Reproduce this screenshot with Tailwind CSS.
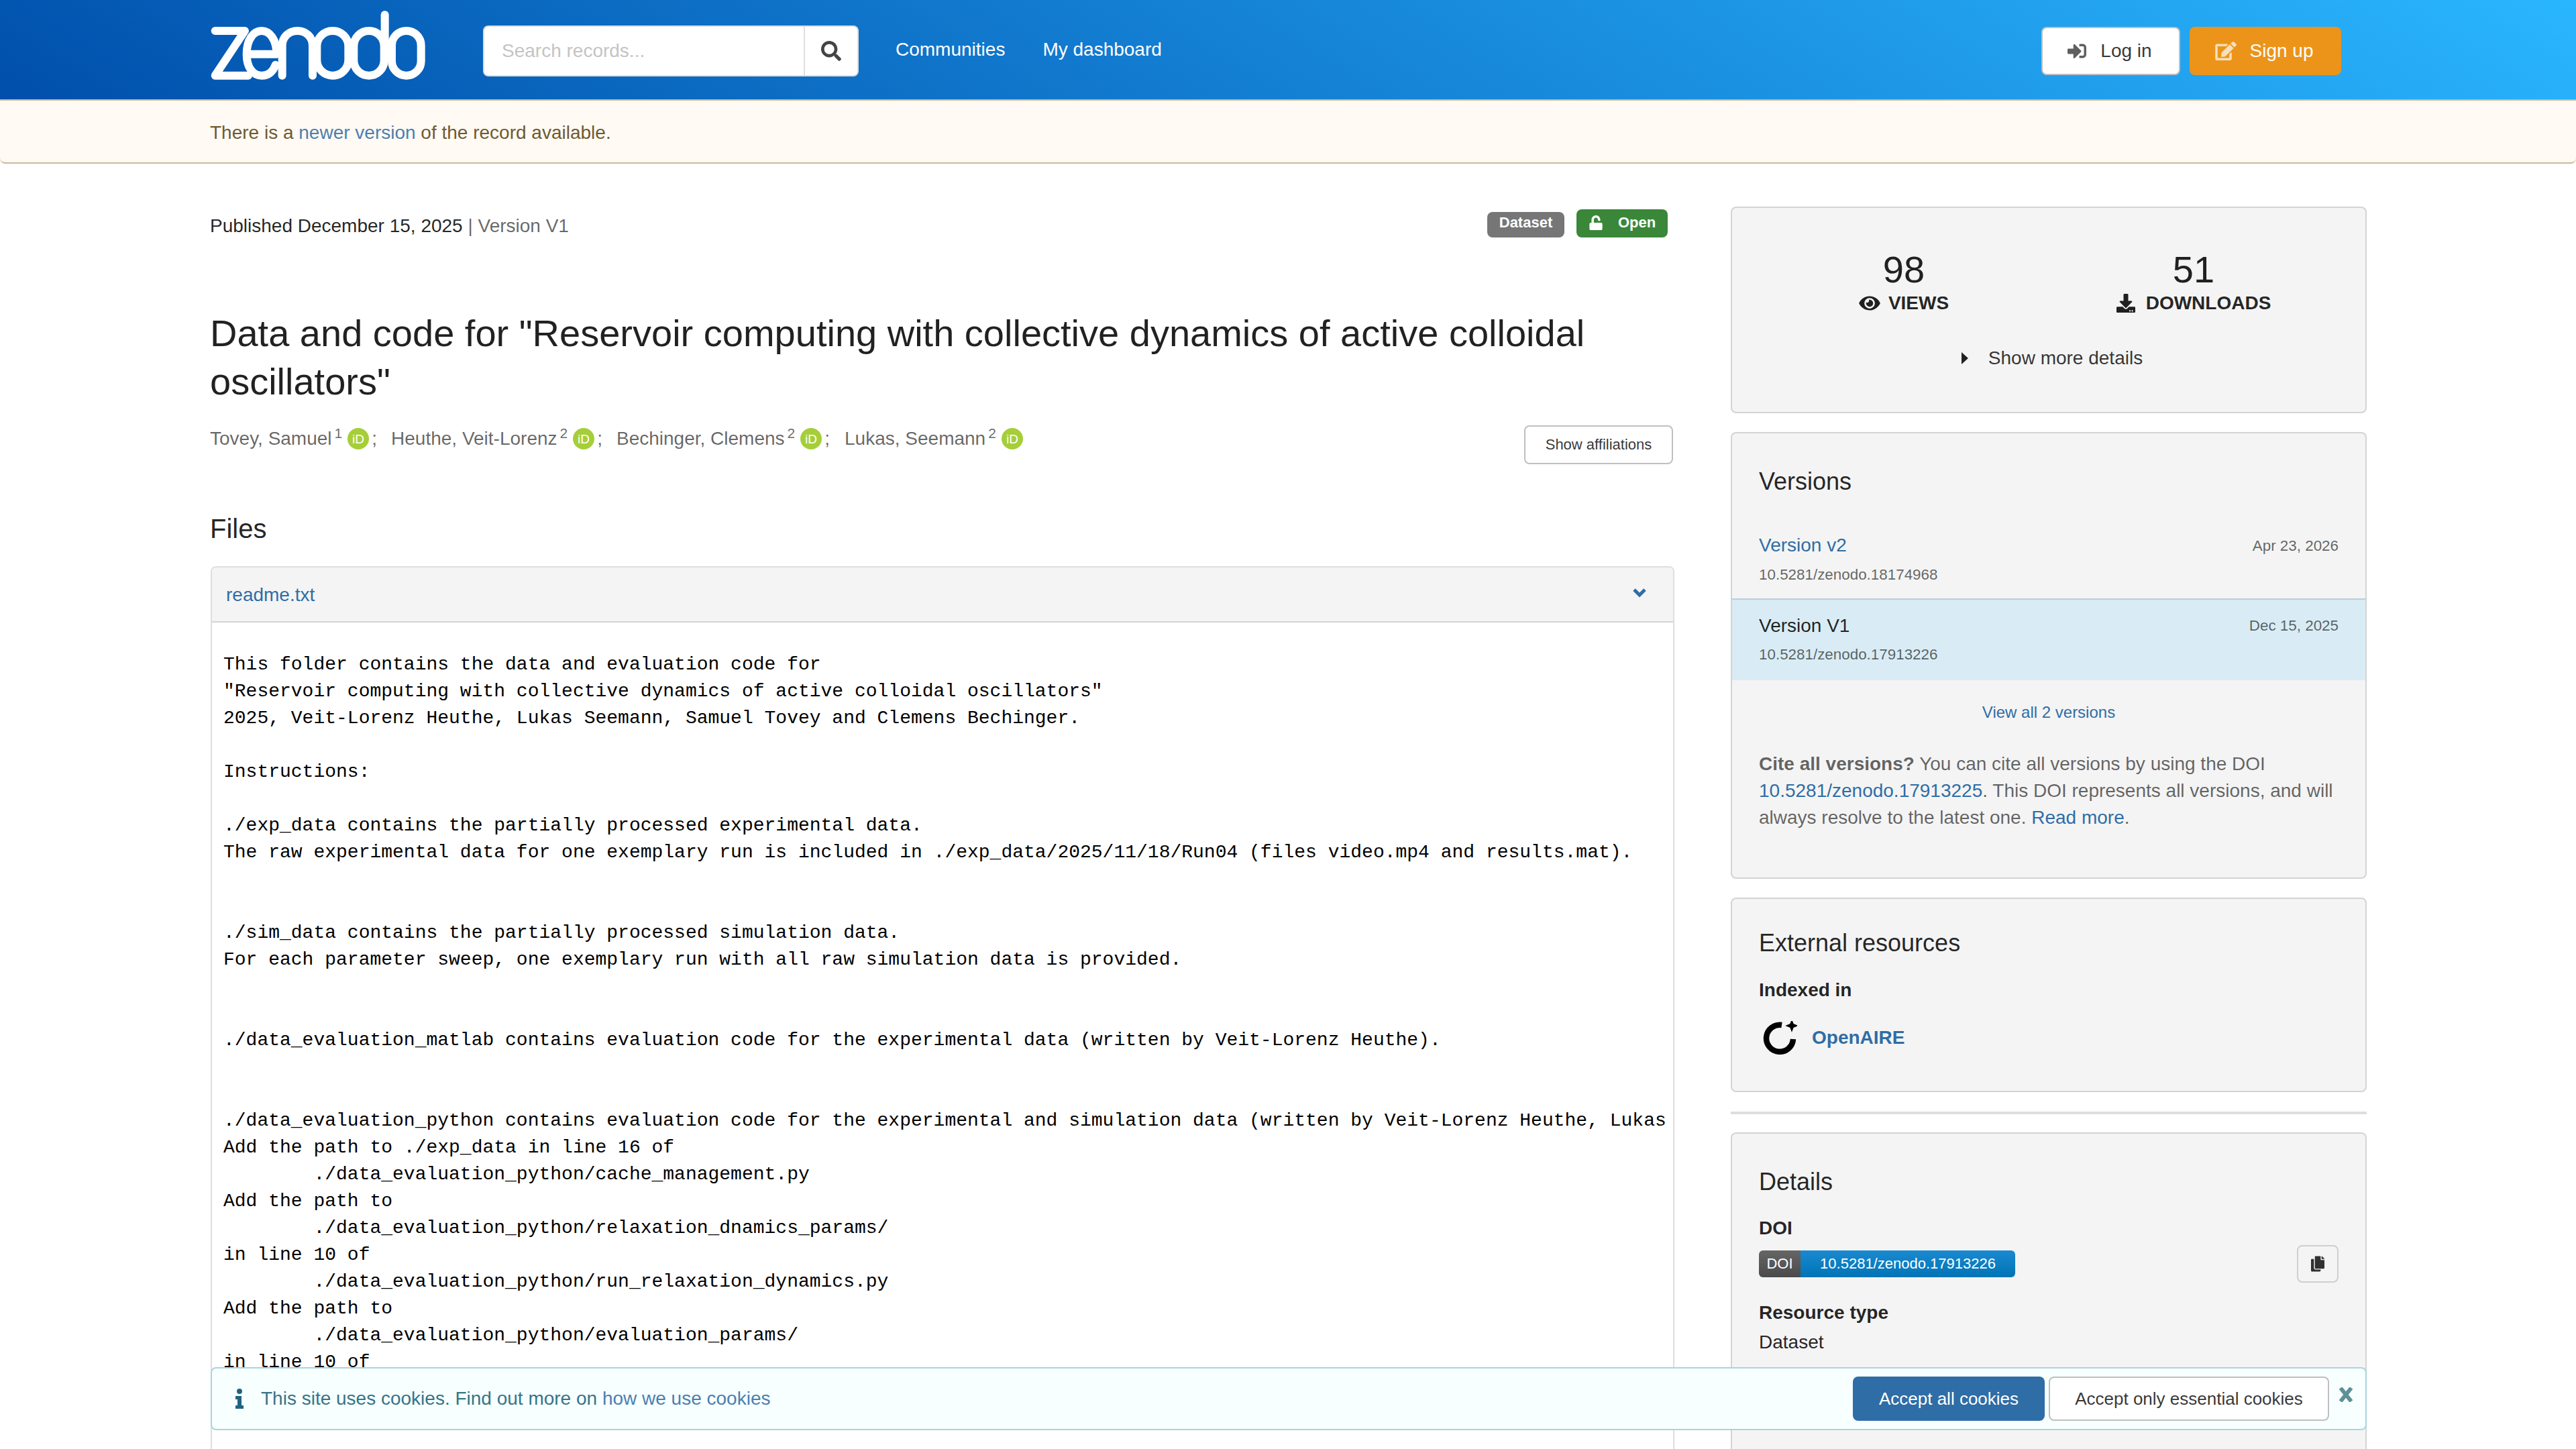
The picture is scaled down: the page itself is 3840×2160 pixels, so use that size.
<!DOCTYPE html>
<html>
<head>
<meta charset="utf-8">
<script src="https://cdn.jsdelivr.net/npm/@tailwindcss/browser@4"></script>
</head>
<body class="m-0 bg-white">
<div class="relative w-[3840px] h-[2160px] overflow-hidden font-['Liberation_Sans',Arial,sans-serif] text-[28px] leading-[40px] text-[#000000de]">

  <header class="h-[148px] bg-[linear-gradient(31deg,#004fab_0%,#2ab6ff_100%)]">
    <div class="w-[3216px] mx-auto h-full flex items-center relative">
      <svg class="absolute left-[-12px] top-0" width="360" height="140" viewBox="0 0 1080 420" fill="none" stroke="#fff" stroke-width="36" stroke-linecap="round" stroke-linejoin="round">
        <path d="M62 138H195L62 338H210"/>
        <path d="M203 242H337C337 175 305 138 270 138C235 138 203 175 203 242C203 300 230 338 270 338C300 338 322 320 332 290"/>
        <path d="M362 338V205C362 165 392 138 430 138C468 138 498 165 498 205V338"/>
        <rect x="517" y="138" width="141" height="200" rx="70"/>
        <rect x="682" y="138" width="136" height="200" rx="68"/>
        <path d="M821 66V240"/>
        <rect x="852" y="138" width="131" height="200" rx="65"/>
      </svg>
      <div class="ml-[408px] flex w-[560px] h-[76px] mt-[4px] bg-white rounded-[8px] border-2 border-[#22242626] overflow-hidden">
        <div class="flex-1 px-[26px] flex items-center text-[#c4c4c4] text-[28px]">Search records...</div>
        <div class="w-[80px] border-l-2 border-[#22242626] flex items-center justify-center">
          <svg width="30" height="30" viewBox="0 0 512 512" fill="#444"><path d="M505 442.700L405.300 343c-4.500-4.500-10.600-7-17-7H372c27.600-35.300 44-79.700 44-128C416 93.100 322.900 0 208 0S0 93.100 0 208s93.100 208 208 208c48.300 0 92.700-16.400 128-44v16.300c0 6.400 2.500 12.500 7 17l99.700 99.700c9.400 9.400 24.600 9.400 33.900 0l28.300-28.300c9.400-9.400 9.400-24.600.1-34zM208 336c-70.700 0-128-57.200-128-128 0-70.700 57.200-128 128-128 70.700 0 128 57.200 128 128 0 70.700-57.200 128-128 128z"/></svg>
        </div>
      </div>
      <a class="ml-[55px] text-white">Communities</a>
      <a class="ml-[56px] text-white">My dashboard</a>
      <div class="ml-auto mr-[38px] flex gap-[14px] mt-[4px]">
        <div class="w-[207px] h-[72px] pr-[4px] bg-white rounded-[8px] border-2 border-[#00000040] flex items-center justify-center gap-[20px] text-[#000000cc]">
          <svg width="30" height="28" viewBox="0 0 512 512" fill="#000000a0"><path d="M416 448h-84c-6.600 0-12-5.400-12-12v-40c0-6.600 5.400-12 12-12h84c17.700 0 32-14.300 32-32V160c0-17.700-14.300-32-32-32h-84c-6.600 0-12-5.400-12-12V76c0-6.600 5.400-12 12-12h84c53 0 96 43 96 96v192c0 53-43 96-96 96zm-47-201L201 79c-15-15-41-4.500-41 17v96H24c-13.300 0-24 10.700-24 24v96c0 13.300 10.700 24 24 24h136v96c0 21.500 26 32 41 17l168-168c9.300-9.400 9.300-24.600 0-34z"/></svg>
          <span>Log in</span>
        </div>
        <div class="w-[226px] h-[72px] pr-[4px] bg-[#ec9419] rounded-[8px] flex items-center justify-center gap-[20px] text-white">
          <svg width="32" height="28" viewBox="0 0 576 512" fill="#ffffffb3"><path d="M402.600 83.200l90.200 90.200c3.800 3.800 3.800 10 0 13.800L274.400 405.600l-92.800 10.300c-12.400 1.400-22.900-9.100-21.500-21.500l10.300-92.800L388.800 83.200c3.800-3.800 10-3.800 13.800 0zm162-22.900l-48.800-48.800c-15.200-15.200-39.900-15.200-55.200 0l-35.400 35.400c-3.800 3.800-3.800 10 0 13.800l90.200 90.200c3.800 3.800 10 3.800 13.800 0l35.400-35.400c15.200-15.300 15.200-40 0-55.200zM384 346.200V448H64V128h229.800c3.200 0 6.200-1.300 8.500-3.500l40-40c7.600-7.600 2.200-20.500-8.500-20.500H48C21.500 64 0 85.500 0 112v352c0 26.500 21.500 48 48 48h352c26.500 0 48-21.500 48-48V306.200c0-10.700-12.900-16-20.500-8.500l-40 40c-2.200 2.300-3.500 5.300-3.500 8.500z"/></svg>
          <span>Sign up</span>
        </div>
      </div>
    </div>
  </header>

  <div class="h-[96px] bg-[#fffaf3] border-y-2 border-[#c9ba9b] rounded-b-[8px] text-[#6e5a32]">
    <div class="w-[3216px] mx-auto h-full flex items-center pl-[1px] pt-[4px]">
      <p>There is a <a class="text-[#4a80b0]">newer version</a> of the record available.</p>
    </div>
  </div>

  <main class="w-[3216px] mx-auto flex justify-between mt-[64px]">
    <!-- left column -->
    <div class="w-[2184px] pl-[1px]">
      <div class="flex items-start justify-between h-[58px] pr-[10px]">
        <p class="pt-[9px]"><span>Published December 15, 2025</span> <span class="text-[#00000099]">| Version V1</span></p>
        <div class="flex gap-[18px] items-end h-[44px] mt-[2px] font-bold text-[22px] text-white">
          <div class="w-[115px] h-[38px] bg-[#767676] rounded-[8px] flex items-center justify-center leading-none pb-[6px]">Dataset</div>
          <div class="w-[136px] h-[42px] bg-[#3a873a] rounded-[8px] flex items-center justify-center gap-[22px] leading-none pb-[2px]">
            <svg width="22" height="22" viewBox="0 0 448 512" fill="#fff"><path d="M400 256H152V152.900c0-39.600 31.700-72.500 71.300-72.900 40-.4 72.700 32.100 72.700 72v16c0 13.300 10.700 24 24 24h32c13.300 0 24-10.700 24-24v-16C376 68 307.500-.3 223.500 0 139.500.3 72 69.500 72 153.500V256H48c-26.500 0-48 21.500-48 48v160c0 26.500 21.500 48 48 48h352c26.500 0 48-21.500 48-48V304c0-26.500-21.500-48-48-48z"/></svg>
            <span>Open</span>
          </div>
        </div>
      </div>
      <h1 class="mt-[95px] text-[56px] leading-[72px] font-normal text-[#000000de]">Data and code for "Reservoir computing with collective dynamics of active colloidal oscillators"</h1>
      <div class="flex justify-between mt-[29px] h-[60px]">
        <div class="flex items-start text-[#00000099] leading-[40px]">
          <span>Tovey, Samuel<sup class="text-[21px] ml-[4px]">1</sup></span><svg class="ml-[8px] mt-[4px] mr-[4px]" width="32" height="32" viewBox="0 0 32 32"><circle cx="16" cy="16" r="16" fill="#a6ce39"/><text x="16" y="22.500" font-size="19" text-anchor="middle" fill="#fff" font-family="Liberation Sans">iD</text></svg><span>;</span>
          <span class="ml-[21px]">Heuthe, Veit-Lorenz<sup class="text-[21px] ml-[4px]">2</sup></span><svg class="ml-[8px] mt-[4px] mr-[4px]" width="32" height="32" viewBox="0 0 32 32"><circle cx="16" cy="16" r="16" fill="#a6ce39"/><text x="16" y="22.500" font-size="19" text-anchor="middle" fill="#fff" font-family="Liberation Sans">iD</text></svg><span>;</span>
          <span class="ml-[21px]">Bechinger, Clemens<sup class="text-[21px] ml-[4px]">2</sup></span><svg class="ml-[8px] mt-[4px] mr-[4px]" width="32" height="32" viewBox="0 0 32 32"><circle cx="16" cy="16" r="16" fill="#a6ce39"/><text x="16" y="22.500" font-size="19" text-anchor="middle" fill="#fff" font-family="Liberation Sans">iD</text></svg><span>;</span>
          <span class="ml-[22px]">Lukas, Seemann<sup class="text-[21px] ml-[4px]">2</sup></span><svg class="ml-[8px] mt-[4px]" width="32" height="32" viewBox="0 0 32 32"><circle cx="16" cy="16" r="16" fill="#a6ce39"/><text x="16" y="22.500" font-size="19" text-anchor="middle" fill="#fff" font-family="Liberation Sans">iD</text></svg>
        </div>
        <div class="w-[222px] h-[58px] mr-[2px] border-2 border-[#00000040] rounded-[8px] flex items-center justify-center text-[22px] text-[#000000cc]">Show affiliations</div>
      </div>
      <h2 class="mt-[74px] text-[40px] leading-[40px] font-normal">Files</h2>
      <div class="mt-[36px] ml-[1px] border-2 border-[#22242626] rounded-t-[8px] h-[1500px] overflow-hidden">
        <div class="h-[82px] bg-[#f4f4f4] border-b-2 border-[#22242626] flex items-center justify-between pl-[21px] pr-[40px]">
          <a class="text-[#2f6da6] pt-[2px]">readme.txt</a>
          <svg class="mb-[4px]" width="20" height="14" viewBox="0 0 20 14" fill="none" stroke="#2f6da6" stroke-width="5"><path d="M2 2l8 8 8-8"/></svg>
        </div>
        <pre class="pt-[43px] pl-[17px] font-['Liberation_Mono',monospace] text-[28px] leading-[40px] text-black overflow-hidden whitespace-pre">This folder contains the data and evaluation code for
"Reservoir computing with collective dynamics of active colloidal oscillators"
2025, Veit-Lorenz Heuthe, Lukas Seemann, Samuel Tovey and Clemens Bechinger.

Instructions:

./exp_data contains the partially processed experimental data.
The raw experimental data for one exemplary run is included in ./exp_data/2025/11/18/Run04 (files video.mp4 and results.mat).


./sim_data contains the partially processed simulation data.
For each parameter sweep, one exemplary run with all raw simulation data is provided.


./data_evaluation_matlab contains evaluation code for the experimental data (written by Veit-Lorenz Heuthe).


./data_evaluation_python contains evaluation code for the experimental and simulation data (written by Veit-Lorenz Heuthe, Lukas Seemann and Samuel Tovey).
Add the path to ./exp_data in line 16 of
        ./data_evaluation_python/cache_management.py
Add the path to
        ./data_evaluation_python/relaxation_dnamics_params/
in line 10 of
        ./data_evaluation_python/run_relaxation_dynamics.py
Add the path to
        ./data_evaluation_python/evaluation_params/
in line 10 of</pre>
      </div>
    </div>

    <!-- right column -->
    <div class="w-[948px] flex flex-col">
      <section class="h-[308px] bg-[#f4f4f4] border-2 border-[#22242626] rounded-[8px] px-[40px] pt-[63px]">
        <div class="grid grid-cols-2">
          <div class="flex flex-col items-center">
            <div class="text-[56px] leading-[58px] text-[#000000de]">98</div>
            <div class="flex items-center gap-[12px] font-bold leading-[34px] h-[36px] mt-[3px]">
              <svg width="32" height="28" viewBox="0 0 576 512" fill="#000000de"><path d="M572.500 241.400C518.300 135.600 410.900 64 288 64S57.700 135.600 3.500 241.400a32.400 32.400 0 0 0 0 29.200C57.700 376.400 165.100 448 288 448s230.300-71.600 284.500-177.400a32.400 32.400 0 0 0 0-29.200zM288 400a144 144 0 1 1 144-144 143.900 143.900 0 0 1-144 144zm0-240a95.300 95.300 0 0 0-25.300 3.800 47.900 47.900 0 0 1-66.900 66.900A95.800 95.800 0 1 0 288 160z"/></svg>
              <span>VIEWS</span>
            </div>
          </div>
          <div class="flex flex-col items-center">
            <div class="text-[56px] leading-[58px] text-[#000000de]">51</div>
            <div class="flex items-center gap-[16px] font-bold leading-[34px] h-[36px] mt-[3px]">
              <svg width="28" height="28" viewBox="0 0 512 512" fill="#000000de"><path d="M216 0h80c13.300 0 24 10.700 24 24v168h87.700c17.800 0 26.700 21.500 14.100 34.100L269.700 378.300c-7.500 7.500-19.800 7.500-27.300 0L90.100 226.100c-12.600-12.600-3.700-34.100 14.100-34.100H192V24c0-13.300 10.700-24 24-24zm296 376v112c0 13.300-10.700 24-24 24H24c-13.300 0-24-10.700-24-24V376c0-13.300 10.700-24 24-24h146.700l49 49c20.100 20.100 52.500 20.100 72.600 0l49-49H488c13.300 0 24 10.700 24 24zm-124 88c0-11-9-20-20-20s-20 9-20 20 9 20 20 20 20-9 20-20zm64 0c0-11-9-20-20-20s-20 9-20 20 9 20 20 20 20-9 20-20z"/></svg>
              <span>DOWNLOADS</span>
            </div>
          </div>
        </div>
        <div class="flex items-center justify-center mt-[44px] gap-[30px] pl-[10px] text-[#000000cc]">
          <svg width="10" height="18" viewBox="0 0 10 18" fill="#000000de"><path d="M0 0l10 9-10 9z"/></svg>
          <span>Show more details</span>
        </div>
      </section>

      <section class="mt-[28px] h-[666px] bg-[#f4f4f4] border-2 border-[#22242626] rounded-[8px]">
        <h3 class="pl-[40px] pt-[52px] text-[36px] leading-[40px] font-normal">Versions</h3>
        <div class="mt-[53px] h-[101px] px-[40px]">
          <div class="flex justify-between items-center"><a class="text-[#2f6da6]">Version v2</a><span class="text-[22.400px] text-[#00000099] mt-[3px]">Apr 23, 2026</span></div>
          <div class="mt-[8px] text-[22.400px] leading-[30px] text-[#00000099]">10.5281/zenodo.18174968</div>
        </div>
        <div class="h-[122px] bg-[#d9ecf5] border-t-2 border-[#bcccd6] px-[40px] pt-[19px]">
          <div class="flex justify-between items-center"><span>Version V1</span><span class="text-[22.400px] text-[#00000099]">Dec 15, 2025</span></div>
          <div class="mt-[8px] text-[22.400px] leading-[30px] text-[#00000099]">10.5281/zenodo.17913226</div>
        </div>
        <div class="text-center mt-[32px] text-[24px] leading-[32px] text-[#2f6da6]">View all 2 versions</div>
        <p class="mx-[40px] mt-[41px] text-[#00000099]"><b>Cite all versions?</b> You can cite all versions by using the DOI <a class="text-[#2f6da6]">10.5281/zenodo.17913225</a>. This DOI represents all versions, and will always resolve to the latest one. <a class="text-[#2f6da6]">Read more</a>.</p>
      </section>

      <section class="mt-[28px] h-[290px] bg-[#f4f4f4] border-2 border-[#22242626] rounded-[8px] px-[40px]">
        <h3 class="pt-[46px] text-[36px] leading-[40px] font-normal">External resources</h3>
        <div class="mt-[30px] font-bold">Indexed in</div>
        <div class="mt-[26px] ml-[5px] flex items-center gap-[22px]">
          <svg width="52" height="50" viewBox="0 0 52 50" fill="none"><path d="M29 6A20 20 0 1 0 46 27" stroke="#000" stroke-width="8.500"/><path d="M44 14l2-5 5-2-5-2-2-5-2 5-5 2 5 2z" stroke="#000" stroke-width="2" fill="#000"/></svg>
          <a class="font-bold text-[#2f6da6]">OpenAIRE</a>
        </div>
      </section>

      <div class="mt-[29px] h-[4px] bg-[#22242626]"></div>

      <section class="mt-[27px] h-[600px] bg-[#f4f4f4] border-2 border-[#22242626] rounded-[8px] px-[40px]">
        <h3 class="pt-[52px] text-[36px] leading-[40px] font-normal">Details</h3>
        <div class="mt-[29px] font-bold">DOI</div>
        <div class="mt-[5px] flex items-center justify-between h-[56px]">
          <div class="flex h-[40px] w-[382px] rounded-[6px] overflow-hidden text-[22px] text-white leading-[40px]">
            <div class="w-[62px] bg-[linear-gradient(#666,#4a4a4a)] text-center">DOI</div>
            <div class="flex-1 bg-[linear-gradient(#1a8ad0,#0073b6)] text-center">10.5281/zenodo.17913226</div>
          </div>
          <div class="w-[62px] h-[56px] border-2 border-[#00000026] rounded-[8px] flex items-center justify-center">
            <svg width="20" height="24" viewBox="0 0 448 512" fill="#000000cc"><path d="M320 448v40c0 13.300-10.700 24-24 24H24c-13.300 0-24-10.700-24-24V120c0-13.300 10.700-24 24-24h72v296c0 30.900 25.100 56 56 56h168zm0-344V0H152c-13.300 0-24 10.700-24 24v368c0 13.300 10.700 24 24 24h272c13.300 0 24-10.700 24-24V128H344c-13.200 0-24-10.800-24-24zm120.970-31.030L375.030 7.030A24 24 0 0 0 358.060 0H352v96h96v-6.060a24 24 0 0 0-7.030-16.970z"/></svg>
          </div>
        </div>
        <div class="mt-[25px] font-bold">Resource type</div>
        <div class="mt-[4px]">Dataset</div>
      </section>
    </div>
  </main>

  <!-- cookie banner -->
  <div class="absolute left-[314px] top-[2038px] w-[3214px] h-[94px] bg-[#f8ffff] border-2 border-[#a9d5de] rounded-[8px] flex items-center text-[#357587] pl-[34px]">
    <svg width="14" height="30" viewBox="0 0 14 30" fill="#1f6480"><circle cx="7" cy="4" r="4"/><path d="M1 11h9v14h3v5H1v-5h3v-9H1z"/></svg>
    <span class="ml-[25px]">This site uses cookies. Find out more on <a class="text-[#4a80b0]">how we use cookies</a></span>
    <div class="absolute left-[2446px] top-[12px] w-[286px] h-[66px] bg-[#2f6da6] text-white text-[26px] rounded-[8px] flex items-center justify-center">Accept all cookies</div>
    <div class="absolute left-[2738px] top-[12px] w-[418px] h-[66px] bg-white border-2 border-[#00000040] text-[#000000cc] text-[26px] rounded-[8px] flex items-center justify-center">Accept only essential cookies</div>
    <svg class="absolute left-[3170px] top-[28px]" width="22" height="22" viewBox="0 0 22 22" fill="none" stroke="#5f9098" stroke-width="6"><path d="M3 1l16 20M19 1L3 21"/></svg>
  </div>
</div>
</body>
</html>
